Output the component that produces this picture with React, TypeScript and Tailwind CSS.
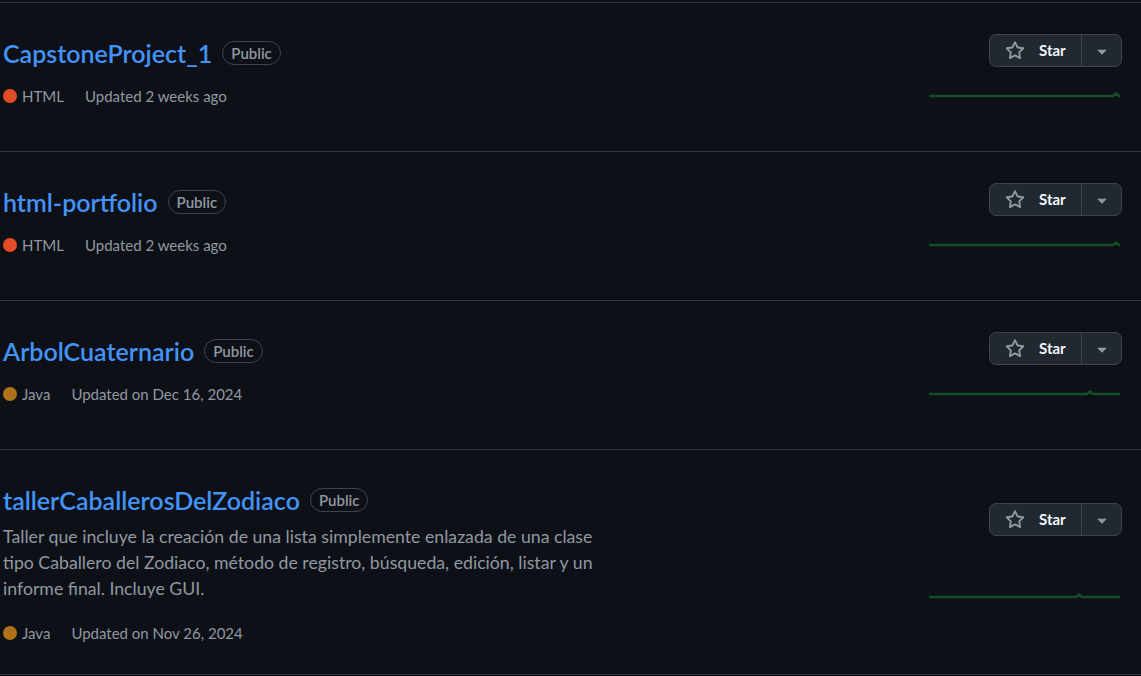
import React from "react";

type Repo = {
  name: string;
  desc?: string[];
  lang: string;
  langColor: string;
  updated: string;
  bump: number;
  starMt: string;
  sparkMt: string;
};

const repos: Repo[] = [
  {
    name: "CapstoneProject_1",
    lang: "HTML",
    langColor: "#e34c26",
    updated: "Updated 2 weeks ago",
    bump: 187,
    starMt: "mt-[1px]",
    sparkMt: "mt-[15px]",
  },
  {
    name: "html-portfolio",
    lang: "HTML",
    langColor: "#e34c26",
    updated: "Updated 2 weeks ago",
    bump: 187,
    starMt: "mt-[1px]",
    sparkMt: "mt-[15px]",
  },
  {
    name: "ArbolCuaternario",
    lang: "Java",
    langColor: "#b07219",
    updated: "Updated on Dec 16, 2024",
    bump: 161,
    starMt: "mt-[1px]",
    sparkMt: "mt-[15px]",
  },
  {
    name: "tallerCaballerosDelZodiaco",
    desc: [
      "Taller que incluye la creación de una lista simplemente enlazada de una clase",
      "tipo Caballero del Zodiaco, método de registro, búsqueda, edición, listar y un",
      "informe final. Incluye GUI.",
    ],
    lang: "Java",
    langColor: "#b07219",
    updated: "Updated on Nov 26, 2024",
    bump: 150,
    starMt: "mt-[23px]",
    sparkMt: "mt-[47px]",
  },
];

function StarIcon() {
  return (
    <svg width="20" height="20" viewBox="0 0 16 16" fill="#9198a1">
      <path d="M8 .25a.75.75 0 0 1 .673.418l1.882 3.815 4.21.612a.75.75 0 0 1 .416 1.279l-3.046 2.97.719 4.192a.751.751 0 0 1-1.088.791L8 12.347l-3.766 1.98a.75.75 0 0 1-1.088-.79l.72-4.194L.818 6.374a.75.75 0 0 1 .416-1.28l4.21-.611L7.327.668A.75.75 0 0 1 8 .25Zm0 2.445L6.615 5.5a.75.75 0 0 1-.564.41l-3.097.45 2.24 2.184a.75.75 0 0 1 .216.664l-.528 3.084 2.769-1.456a.75.75 0 0 1 .698 0l2.77 1.456-.53-3.084a.75.75 0 0 1 .216-.664l2.24-2.183-3.096-.45a.75.75 0 0 1-.564-.41L8 2.694Z" />
    </svg>
  );
}

function Caret() {
  return (
    <svg width="20" height="20" viewBox="0 0 16 16" fill="#9198a1">
      <path d="m4.427 7.427 3.396 3.396a.25.25 0 0 0 .354 0l3.396-3.396A.25.25 0 0 0 11.396 7H4.604a.25.25 0 0 0-.177.427Z" />
    </svg>
  );
}

function Sparkline({ bump }: { bump: number }) {
  const d = `M0 14 L${bump - 3} 14 L${bump} 11.5 L${bump + 3} 14 L191 14`;
  return (
    <svg width="193" height="39" viewBox="0 0 193 39" fill="none">
      <path d={d} stroke="#144d27" strokeWidth="2.5" strokeLinejoin="round" />
    </svg>
  );
}

function RepoRow({ repo }: { repo: Repo }) {
  return (
    <li className="flex justify-between border-b border-[#30363d] py-[30px] pl-[3px] pr-[19px]">
      <div className="flex min-w-0 flex-col">
        <div className="flex h-[40px] items-center">
          <a className="text-[25px] font-semibold leading-[40px] text-[#4493f8]">
            {repo.name}
          </a>
          <span className="ml-[10px] rounded-full border border-[#3d444d] px-[8px] text-[15px] font-semibold leading-[22px] text-[#9198a1]">
            Public
          </span>
        </div>
        {repo.desc && (
          <p className="mt-[4px] text-[17.7px] leading-[26px] text-[#9198a1]">
            {repo.desc.map((l) => (
              <span key={l} className="block whitespace-nowrap">
                {l}
              </span>
            ))}
          </p>
        )}
        <div
          className={`flex items-center text-[15px] leading-[22px] text-[#9198a1] ${
            repo.desc ? "mt-[20px]" : "mt-[12px]"
          }`}
        >
          <span
            className="mr-[5px] inline-block h-[14px] w-[14px] rounded-full"
            style={{ backgroundColor: repo.langColor }}
          />
          <span>{repo.lang}</span>
          <span className="ml-[21px]">{repo.updated}</span>
        </div>
      </div>
      <div className="flex shrink-0 flex-col items-end">
        <div
          className={`flex h-[33px] overflow-hidden rounded-[7px] border border-[#3d444d] bg-[#212830] ${repo.starMt}`}
        >
          <button className="flex w-[91px] items-center pl-[15px] text-[15px] font-bold text-[#f0f6fc]">
            <StarIcon />
            <span className="ml-[14px]">Star</span>
          </button>
          <button className="flex w-[40px] items-center justify-center border-l border-[#3d444d]">
            <Caret />
          </button>
        </div>
        <div className={repo.sparkMt}>
          <Sparkline bump={repo.bump} />
        </div>
      </div>
    </li>
  );
}

export default function App() {
  return (
    <div
      className="min-h-[676px] w-full bg-[#0d1117]"
      style={{ fontFamily: 'Lato, "Noto Sans", sans-serif' }}
    >
      <div className="h-[2px]" />
      <ul className="border-t border-[#30363d]">
        {repos.map((r) => (
          <RepoRow key={r.name} repo={r} />
        ))}
      </ul>
    </div>
  );
}
